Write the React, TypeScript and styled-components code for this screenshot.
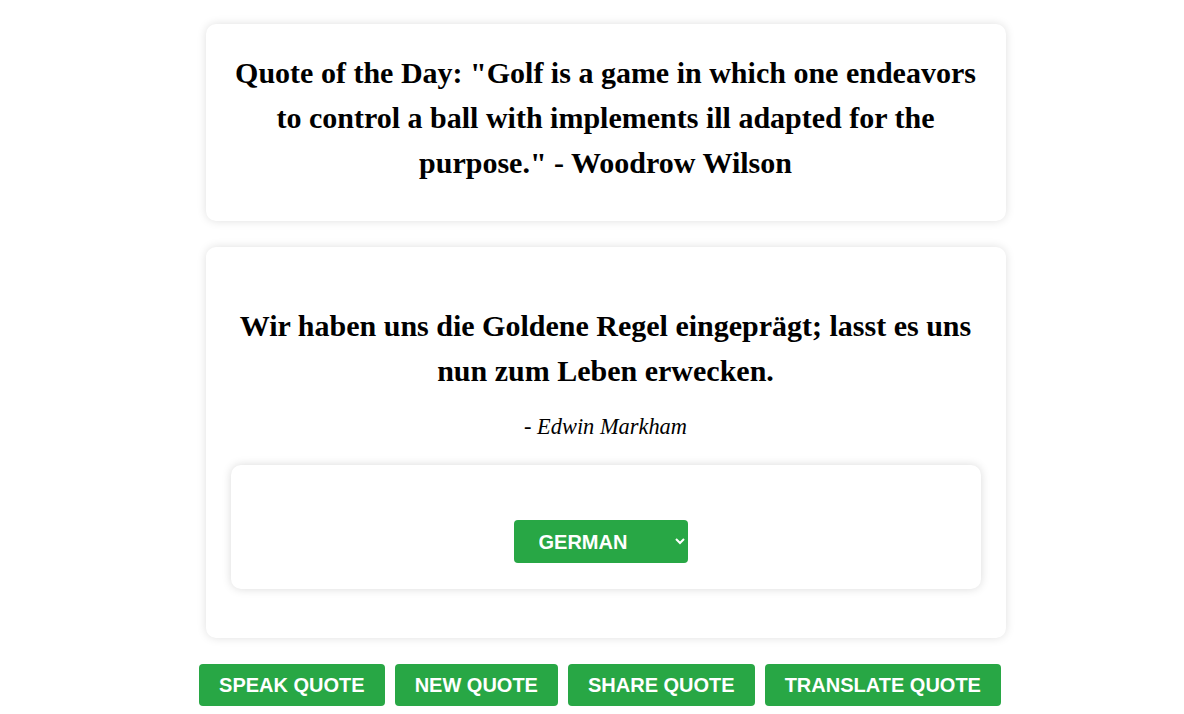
import React from "react";
import styled, { createGlobalStyle } from "styled-components";

const Global = createGlobalStyle`
  html, body { margin: 0; padding: 0; background: #ffffff; }
  body { font-family: "Liberation Serif", "Times New Roman", serif; }
`;

const Page = styled.div`
  display: flex;
  flex-direction: column;
  align-items: flex-start;
  padding: 24px 0 8px 199px;
`;

const Column = styled.div`
  display: flex;
  flex-direction: column;
  gap: 26px;
  width: 802px;
  align-items: center;
`;

const Card = styled.section<{ $pad: string }>`
  box-sizing: border-box;
  width: 800px;
  margin-left: 11px;
  background: #fff;
  border-radius: 10px;
  box-shadow: 0 0 10px rgba(0, 0, 0, 0.13);
  text-align: center;
  padding: ${(p) => p.$pad};
`;

const Heading = styled.h1`
  margin: 0;
  font-family: "Liberation Serif", "Times New Roman", serif;
  font-weight: 700;
  font-size: 30px;
  line-height: 45px;
  color: #000;
`;

const Quote = styled.p`
  margin: 0;
  font-family: "Liberation Serif", "Times New Roman", serif;
  font-weight: 700;
  font-size: 30px;
  line-height: 45px;
  color: #000;
`;

const Author = styled.p`
  margin: 16px 0 0;
  font-family: "Liberation Serif", "Times New Roman", serif;
  font-style: italic;
  font-size: 22.4px;
  line-height: 36px;
  color: #000;
`;

const Inner = styled.div`
  margin-top: 20px;
  box-sizing: border-box;
  height: 124px;
  background: #fff;
  border-radius: 10px;
  box-shadow: 0 0 10px rgba(0, 0, 0, 0.15);
  display: flex;
  justify-content: center;
  padding-top: 55px;
`;

const Select = styled.select`
  box-sizing: border-box;
  width: 174px;
  height: 43px;
  margin-right: 10px;
  padding: 0 7px 0 21px;
  background: #28a745;
  color: #fff;
  border: none;
  border-radius: 4px;
  font-family: "Liberation Sans", Arial, sans-serif;
  font-weight: 700;
  font-size: 20px;
  text-transform: uppercase;
  outline: none;
`;

const Buttons = styled.div`
  display: flex;
  gap: 10px;
`;

const Button = styled.button`
  box-sizing: border-box;
  height: 42px;
  padding: 0 20px;
  background: #28a745;
  color: #fff;
  border: none;
  border-radius: 4px;
  font-family: "Liberation Sans", Arial, sans-serif;
  font-weight: 700;
  font-size: 20px;
  text-transform: uppercase;
  cursor: pointer;
`;

export default function App() {
  return (
    <>
      <Global />
      <Page>
        <Column>
          <Card $pad="26px 20px 36px">
            <Heading>
              Quote of the Day: "Golf is a game in which one endeavors to control a ball with
              implements ill adapted for the purpose." - Woodrow Wilson
            </Heading>
          </Card>
          <Card $pad="56px 25px 49px">
            <Quote>Wir haben uns die Goldene Regel eingeprägt; lasst es uns nun zum Leben erwecken.</Quote>
            <Author>- Edwin Markham</Author>
            <Inner>
              <Select defaultValue="de">
                <option value="de">German</option>
                <option value="fr">French</option>
                <option value="es">Spanish</option>
              </Select>
            </Inner>
          </Card>
          <Buttons>
            <Button>Speak Quote</Button>
            <Button>New Quote</Button>
            <Button>Share Quote</Button>
            <Button>Translate Quote</Button>
          </Buttons>
        </Column>
      </Page>
    </>
  );
}
